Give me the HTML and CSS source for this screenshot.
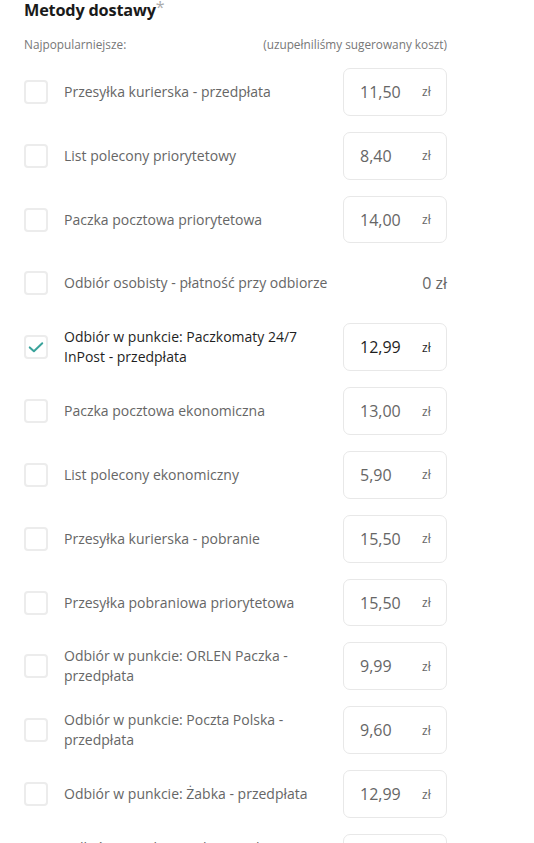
FILE: index.html
```html
<!DOCTYPE html>
<html lang="pl">
<head>
<meta charset="utf-8">
<link rel="stylesheet" href="styles.css">
</head>
<body>
<div class="panel">
  <h2 class="title">Metody dostawy<span class="req">*</span></h2>
  <div class="sub">
    <span>Najpopularniejsze:</span>
    <span>(uzupełniliśmy sugerowany koszt)</span>
  </div>
  <ul class="list">
    <li class="row"><span class="cb"></span><span class="label">Przesyłka kurierska - przedpłata</span><span class="price"><span class="val">11,50</span><span class="cur">zł</span></span></li>
    <li class="row"><span class="cb"></span><span class="label">List polecony priorytetowy</span><span class="price"><span class="val">8,40</span><span class="cur">zł</span></span></li>
    <li class="row"><span class="cb"></span><span class="label">Paczka pocztowa priorytetowa</span><span class="price"><span class="val">14,00</span><span class="cur">zł</span></span></li>
    <li class="row"><span class="cb"></span><span class="label">Odbiór osobisty - płatność przy odbiorze</span><span class="free">0 zł</span></li>
    <li class="row checked"><span class="cb"><svg viewBox="0 0 24 24" width="20" height="20"><path d="M4.5 12.5l5 4.6L19.5 7.5" fill="none" stroke="#3aa39b" stroke-width="2.4" stroke-linecap="round" stroke-linejoin="round"/></svg></span><span class="label">Odbiór w punkcie: Paczkomaty 24/7 InPost - przedpłata</span><span class="price"><span class="val">12,99</span><span class="cur">zł</span></span></li>
    <li class="row"><span class="cb"></span><span class="label">Paczka pocztowa ekonomiczna</span><span class="price"><span class="val">13,00</span><span class="cur">zł</span></span></li>
    <li class="row"><span class="cb"></span><span class="label">List polecony ekonomiczny</span><span class="price"><span class="val">5,90</span><span class="cur">zł</span></span></li>
    <li class="row"><span class="cb"></span><span class="label">Przesyłka kurierska - pobranie</span><span class="price"><span class="val">15,50</span><span class="cur">zł</span></span></li>
    <li class="row"><span class="cb"></span><span class="label">Przesyłka pobraniowa priorytetowa</span><span class="price"><span class="val">15,50</span><span class="cur">zł</span></span></li>
    <li class="row"><span class="cb"></span><span class="label">Odbiór w punkcie: ORLEN Paczka - przedpłata</span><span class="price"><span class="val">9,99</span><span class="cur">zł</span></span></li>
    <li class="row"><span class="cb"></span><span class="label">Odbiór w punkcie: Poczta Polska - przedpłata</span><span class="price"><span class="val">9,60</span><span class="cur">zł</span></span></li>
    <li class="row"><span class="cb"></span><span class="label">Odbiór w punkcie: Żabka - przedpłata</span><span class="price"><span class="val">12,99</span><span class="cur">zł</span></span></li>
    <li class="row"><span class="cb"></span><span class="label">Odbiór w punkcie: Orlen Paczka - pobranie</span><span class="price"><span class="val">12,99</span><span class="cur">zł</span></span></li>
  </ul>
</div>
</body>
</html>
```

FILE: styles.css
```css
* { box-sizing: border-box; }
html, body { margin: 0; padding: 0; background: #fff; }
body {
  font-family: "Open Sans", "Liberation Sans", sans-serif;
  color: #666;
  overflow: hidden;
}
.panel {
  width: 447px;
  padding-left: 24px;
}
.title {
  margin: 0;
  padding-top: 0;
  font-size: 16.3px;
  line-height: 20px;
  font-weight: 700;
  color: #1a1a1a;
  letter-spacing: -0.2px;
}
.req {
  color: #aaa;
  font-weight: 400;
  font-size: 16px;
  position: relative;
  top: -3px;
}
.sub {
  display: flex;
  justify-content: space-between;
  font-size: 11.8px;
  line-height: 16px;
  color: #777;
  margin-top: 16px;
}
.list {
  list-style: none;
  margin: 16px 0 0;
  padding: 0;
  display: flex;
  flex-direction: column;
  gap: 16px;
}
.row {
  display: flex;
  align-items: center;
  height: 47.83px;
}
.cb {
  width: 24px;
  height: 24px;
  flex: none;
  border: 2px solid #ececec;
  border-radius: 4px;
  display: flex;
  align-items: center;
  justify-content: center;
  margin-right: 16px;
}
.label {
  flex: 1;
  font-size: 14px;
  line-height: 20px;
  color: #666;
  padding-right: 14px;
}
.checked .label { color: #1f1f1f; }
.price {
  width: 104px;
  height: 100%;
  flex: none;
  border: 1px solid #e8e8e8;
  border-radius: 7px;
  display: flex;
  align-items: center;
  padding-left: 16px;
}
.val {
  font-size: 16px;
  width: 62px;
  color: #666;
}
.checked .val { color: #1f1f1f; }
.cur {
  font-size: 12px;
  color: #666;
}
.checked .cur { color: #1f1f1f; }
.free {
  font-size: 16px;
  color: #666;
}
```
